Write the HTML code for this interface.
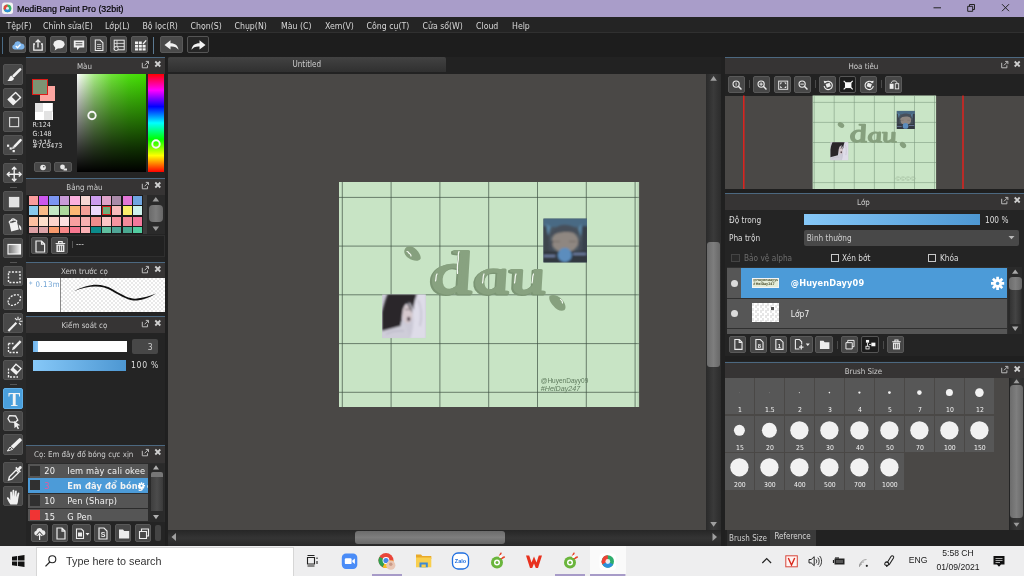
<!DOCTYPE html>
<html><head><meta charset="utf-8"><title>MediBang Paint Pro</title>
<style>
*{box-sizing:border-box;margin:0;padding:0}
html,body{width:1024px;height:576px;overflow:hidden;background:#1f1f1f;font-family:"DejaVu Sans Condensed","DejaVu Sans","Liberation Sans",sans-serif;font-size:8.2px;color:#d8d8d8}
.a{position:absolute}
.t{position:absolute;white-space:nowrap}
#title{left:0;top:0;width:1024px;height:17px;background:#a99dc9;color:#000;-webkit-text-stroke:.2px #000;font-family:"Liberation Sans",sans-serif;font-size:8.9px;line-height:18.400px}
#menu{left:0;top:17px;width:1024px;height:16px;background:#242424;border-bottom:1px solid #303030}
#menu span{position:absolute;top:0;line-height:18.200px;font-size:8.7px;color:#d8d8d8;white-space:nowrap}
#tbar{left:0;top:33px;width:1024px;height:24px;background:#1d1d1d}
.tb{position:absolute;top:36px;height:17px;background:#4a4a4a;border:1px solid #595959;border-radius:2px}
.tool{position:absolute;left:2.500px;width:20.400px;height:20.600px;background:#484848;border:1px solid #545454;border-radius:2px}
svg{position:absolute;left:0;top:0;overflow:visible}
.ph{position:absolute;height:16.500px;background:#363434;border-top:1px solid #4c6880;color:#cdcdcd;font-size:7.9px;line-height:17.400px;text-align:center;white-space:nowrap}
.pb{position:absolute;background:#242424}
.sb{position:absolute;height:17px;background:#474747;border:1px solid #595959;border-radius:2px}
</style></head><body><div id="root" style="position:absolute;left:0;top:0;width:1024px;height:576px;overflow:hidden;will-change:transform">
<div id="title" class="a">
<svg width="17" height="17" viewBox="0 0 17 17"><rect x="2" y="2.5" width="11" height="11.5" rx="2.5" fill="#f4f4f4"/><circle cx="7.5" cy="8.3" r="3.9" fill="#35b26a"/><path d="M7.5 8.3 L7.5 4.4 A3.9 3.9 0 0 0 4.1 10.2 Z" fill="#e8433a"/><path d="M7.5 8.3 L4.1 10.2 A3.9 3.9 0 0 0 10.9 10.2 Z" fill="#2f8fd8"/><circle cx="7.5" cy="8.3" r="1.5" fill="#fff" opacity=".85"/></svg>
<span class="t" style="left:17px;top:0">MediBang Paint Pro (32bit)</span>
<svg width="1024" height="17" viewBox="0 0 1024 17" fill="none" stroke="#222" stroke-width="1"><path d="M933.500 7.800h7.500"/><path d="M967.700 6.300h5v5h-5z M969.500 6.300v-1.800h5v5h-1.800"/><path d="M1002 4.200l7 7 M1009 4.200l-7 7"/></svg>
</div>
<div id="menu" class="a">
<span style="left:6.5px">Tệp(F)</span>
<span style="left:43px">Chỉnh sửa(E)</span>
<span style="left:105px">Lớp(L)</span>
<span style="left:142.5px">Bộ lọc(R)</span>
<span style="left:190.5px">Chọn(S)</span>
<span style="left:234.5px">Chụp(N)</span>
<span style="left:281px">Màu (C)</span>
<span style="left:325px">Xem(V)</span>
<span style="left:366.5px">Công cụ(T)</span>
<span style="left:422.5px">Cửa sổ(W)</span>
<span style="left:476px">Cloud</span>
<span style="left:512px">Help</span>
</div>
<div id="tbar" class="a"><div class="a" style="left:2px;top:4px;width:1px;height:17px;background:#4a6a84"></div><div class="a" style="left:153px;top:4px;width:1px;height:17px;background:#5c7a92"></div></div>
<div class="tb" style="left:9px;width:17px"><svg width="17" height="17" viewBox="0 0 17 17"><path d="M4.5 12.5a2.6 2.6 0 0 1-.3-5.1 3.6 3.6 0 0 1 6.9-.8 2.9 2.9 0 0 1 .9 5.9z" fill="#7db4ea"/><path d="M5.8 9l1.7 1.7 3-3.2" fill="none" stroke="#fff" stroke-width="1.3"/></svg></div>
<div class="tb" style="left:29px;width:17px"><svg width="17" height="17" viewBox="0 0 17 17" fill="none" stroke="#f0f0f0" stroke-width="1.3"><path d="M5 7H3.8v6.2h8.4V7H11"/><path d="M8 10.5V3.2M5.6 5.4L8 3l2.4 2.4"/></svg></div>
<div class="tb" style="left:49.5px;width:17px"><svg width="17" height="17" viewBox="0 0 17 17"><ellipse cx="8" cy="7.3" rx="5.6" ry="4.2" fill="#f0f0f0"/><path d="M4.5 10l-.8 3.4 3.6-2.4z" fill="#f0f0f0"/></svg></div>
<div class="tb" style="left:69.8px;width:17px"><svg width="17" height="17" viewBox="0 0 17 17"><path d="M2.8 3.5h10.4v7H8.6L6 13.2v-2.7H2.8z" fill="#f0f0f0"/><path d="M4.6 5.7h6.8M4.6 7.9h6.8" stroke="#4b4b4b" stroke-width="1"/></svg></div>
<div class="tb" style="left:90px;width:17px"><svg width="17" height="17" viewBox="0 0 17 17" fill="none" stroke="#ececec" stroke-width="1.100"><path d="M4.300 3h4.800l2.800 2.800v7.700H4.300z"/><path d="M6 7.500h4.200M6 9.500h4.200M6 11.500h4.200" stroke-width=".7"/></svg></div>
<div class="tb" style="left:110px;width:17px"><svg width="17" height="17" viewBox="0 0 17 17" fill="none" stroke="#ececec" stroke-width="1"><rect x="3.200" y="3.200" width="10" height="9.600"/><path d="M3.200 6.400h10M3.200 9.600h10M6 3.200v9.600" stroke-width=".8"/><circle cx="5.200" cy="11.600" r="2" fill="#4a4a4a" stroke-width=".9"/></svg></div>
<div class="tb" style="left:130.5px;width:17px"><svg width="17" height="17" viewBox="0 0 17 17" fill="#f0f0f0"><rect x="3" y="4.5" width="3" height="2.6"/><rect x="6.8" y="4.5" width="3" height="2.6"/><rect x="3" y="7.9" width="3" height="2.6"/><rect x="6.8" y="7.9" width="3" height="2.6"/><rect x="10.6" y="7.9" width="3" height="2.6"/><rect x="3" y="11.3" width="3" height="2.2"/><rect x="6.8" y="11.3" width="3" height="2.2"/><rect x="10.6" y="11.3" width="3" height="2.2"/><path d="M10.5 6.5l3.2-3.6 1 .9-3.2 3.6z"/></svg></div>
<div class="tb" style="left:160px;width:22.5px"><svg width="22" height="17" viewBox="0 0 22 17"><path d="M3.5 8L9.5 3.2v3c4.5 0 7.5 2 8 6.6-1.6-2.6-4-3.6-8-3.4v3.2z" fill="#f2f2f2"/></svg></div>
<div class="tb" style="left:186.5px;width:22.5px;background:#262626;border-color:#555"><svg width="22" height="17" viewBox="0 0 22 17"><path d="M17.5 8L11.5 3.2v3c-4.5 0-7.5 2-8 6.6 1.6-2.6 4-3.6 8-3.4v3.2z" fill="#f2f2f2"/></svg></div>
<div class="a" style="left:0;top:56.500px;width:26px;height:1px;background:#3a4854"></div>
<div class="a" style="left:0;top:57px;width:26px;height:489px;background:#282828"></div>
<div class="tool" style="top:64.2px;"><svg width="21" height="21" viewBox="0 0 21 21"><path d="M16.200 4.300L9.600 11" stroke="#f0f0f0" stroke-width="2.500" stroke-linecap="round"/><path d="M7.200 10.600l2.800 2.800c-.600 2.400-3.600 3.200-6.600 2.400 1.800-.800 1.600-3.800 3.800-5.200z" fill="#f0f0f0"/></svg></div>
<div class="tool" style="top:87.7px;"><svg width="21" height="21" viewBox="0 0 21 21"><path d="M11.600 3.600l5 5-7.400 7-5-5z" fill="none" stroke="#f0f0f0" stroke-width="1.400" stroke-linejoin="round"/><path d="M7.400 7.600l5 5-3.200 3-5-5z" fill="#f0f0f0"/></svg></div>
<div class="tool" style="top:111.2px;"><svg width="21" height="21" viewBox="0 0 21 21"><rect x="5.600" y="5.600" width="9" height="9" fill="none" stroke="#d2d2d2" stroke-width="1.200"/></svg></div>
<div class="tool" style="top:134.7px;"><svg width="21" height="21" viewBox="0 0 21 21"><path d="M16.600 4.200L10.600 10.400" stroke="#f0f0f0" stroke-width="2.500" stroke-linecap="round"/><path d="M8.800 10.200l2 2-2.800.900z" fill="#f0f0f0"/><rect x="3" y="8.600" width="2.200" height="2.200" fill="#f0f0f0"/><rect x="5.600" y="11.400" width="2.200" height="2.200" fill="#f0f0f0"/><rect x="8.600" y="14" width="2.200" height="2.200" fill="#f0f0f0"/></svg></div>
<div class="tool" style="top:162.7px;"><svg width="21" height="21" viewBox="0 0 21 21" fill="none" stroke="#f0f0f0" stroke-width="1.400"><path d="M10.200 3.500v13.500M3.500 10.200h13.500"/><path d="M8 5.600l2.200-2.300 2.200 2.300M8 14.800l2.200 2.300 2.200-2.300M5.600 8l-2.300 2.200 2.300 2.200M14.800 8l2.300 2.200-2.300 2.200"/></svg></div>
<div class="tool" style="top:190.7px;"><svg width="21" height="21" viewBox="0 0 21 21"><rect x="5.300" y="5.300" width="9.600" height="9.600" fill="#e2e2e2" stroke="#f6f6f6" stroke-width=".8"/></svg></div>
<div class="tool" style="top:214.2px;"><svg width="21" height="21" viewBox="0 0 21 21"><path d="M5.200 7.600l7.600-1.600 2 8.400-7.600 2.200z" fill="#f0f0f0"/><ellipse cx="9" cy="6.600" rx="3.900" ry="1.500" fill="#474747" stroke="#f0f0f0" stroke-width="1.100" transform="rotate(-12 9 6.600)"/><path d="M7 6.500c0-3.600 4-3.600 4.200-.4" fill="none" stroke="#f0f0f0" stroke-width="1.100"/><path d="M14.600 9.500c2.600 1.400 3 3.600 2.600 5.800-1.600-.600-2.200-2.200-2.600-5.800z" fill="#f0f0f0"/></svg></div>
<div class="tool" style="top:237.7px;"><svg width="21" height="21" viewBox="0 0 21 21"><defs><linearGradient id="gg" x1="0" x2="1"><stop offset="0" stop-color="#6c6c6c"/><stop offset="1" stop-color="#f4f4f4"/></linearGradient></defs><rect x="4" y="5.500" width="12.500" height="9.500" fill="url(#gg)" stroke="#f4f4f4" stroke-width="1.200"/></svg></div>
<div class="tool" style="top:265.7px;"><svg width="21" height="21" viewBox="0 0 21 21"><rect x="4.500" y="5" width="11.500" height="10.500" fill="none" stroke="#f0f0f0" stroke-width="1.400" stroke-dasharray="2 1.400"/></svg></div>
<div class="tool" style="top:289.2px;"><svg width="21" height="21" viewBox="0 0 21 21"><path d="M4.200 12.500c-.600-3.400 3.200-7.600 8-7.800 4.600-.200 5.600 3.600 3 6.800-2.400 3-6.800 4.800-9.200 3.400-1-.600-1.600-1.400-1.800-2.400z" fill="none" stroke="#f0f0f0" stroke-width="1.300" stroke-dasharray="2 1.300"/></svg></div>
<div class="tool" style="top:312.7px;"><svg width="21" height="21" viewBox="0 0 21 21"><path d="M3.600 16.200l8-8.200 1.500 1.500-8 8.200z" fill="#f0f0f0"/><path d="M14 2.800v3.400M11 4.200l2 2M17 4.200l-2 2M15.500 7.200h3M15 9l2 2" stroke="#f0f0f0" stroke-width="1.100" fill="none"/></svg></div>
<div class="tool" style="top:336.2px;"><svg width="21" height="21" viewBox="0 0 21 21"><path d="M4.500 6.500v9h9.500" fill="none" stroke="#f0f0f0" stroke-width="1.300" stroke-dasharray="2 1.300"/><path d="M4.500 6.500h5" fill="none" stroke="#f0f0f0" stroke-width="1.300" stroke-dasharray="2 1.300"/><path d="M15.800 3.200l1.700 1.700-7 7.400-2.600.900.900-2.600z" fill="#f0f0f0"/></svg></div>
<div class="tool" style="top:359.7px;"><svg width="21" height="21" viewBox="0 0 21 21"><path d="M4.500 7.500v8.500h9.500" fill="none" stroke="#f0f0f0" stroke-width="1.300" stroke-dasharray="2 1.300"/><path d="M12 3.200l5 4.400-4.800 5.400-5-4.400z" fill="none" stroke="#f0f0f0" stroke-width="1.300"/><path d="M9.200 6.600l4.800 4.200-1.800 2.200-5-4.400z" fill="#f0f0f0"/></svg></div>
<div class="tool" style="top:388px;background:#4a9fdc;border-color:#5fb0ea;"><svg width="21" height="21" viewBox="0 0 21 21"><text x="10.300" y="16.500" text-anchor="middle" font-family="Liberation Serif,serif" font-weight="bold" font-size="18" fill="#f4f4f4">T</text></svg></div>
<div class="tool" style="top:410.7px;"><svg width="21" height="21" viewBox="0 0 21 21"><path d="M5.400 3.600l6.200.400 2.200 4-2.600 2.400-5.200-.400-2-3.400z" fill="none" stroke="#f0f0f0" stroke-width="1.300"/><path d="M10 9l6.200 4.200-2.600.500 1.500 2.800-1.300.700-1.500-2.800-1.800 1.800z" fill="#f0f0f0"/></svg></div>
<div class="tool" style="top:434.2px;"><svg width="21" height="21" viewBox="0 0 21 21"><path d="M15.500 3c1.300.300 2.200 1.200 2.400 2.400l-8.400 8.400-2.800-2.600z" fill="#f0f0f0"/><path d="M6 12l2.600 2.400-5.200 1.600z" fill="none" stroke="#f0f0f0" stroke-width="1"/></svg></div>
<div class="tool" style="top:462.2px;"><svg width="21" height="21" viewBox="0 0 21 21"><path d="M12.200 7l2.400 2.400-6.800 6.800-3.200.800.800-3.200z" fill="none" stroke="#f0f0f0" stroke-width="1.400"/><path d="M11.200 5l1.200-1.200 1.400 1.400 1.600-1.800c1.200-1.200 3.200.800 2 2l-1.800 1.600 1.400 1.400-1.200 1.200z" fill="#f0f0f0"/></svg></div>
<div class="tool" style="top:485.7px;"><svg width="21" height="21" viewBox="0 0 21 21"><path d="M6.400 17.500c-1.400-2-2.600-4-3.400-6-.400-1.200 1-1.800 1.700-.700l1.500 2.300V5.400c0-1.300 1.700-1.300 1.800 0l.300 4.400.200-6c0-1.300 1.800-1.300 1.800 0l.100 6 .600-5.300c.100-1.300 1.900-1.100 1.800.200l-.400 5.600 1.200-4c.400-1.200 2-.700 1.700.500-.700 3.200-1.100 5.400-1.300 7.400-.100 1.400-.500 2.400-1 3.300z" fill="#f0f0f0"/></svg></div>
<div class="a" style="left:10px;top:159px;width:7px;height:1px;background:#555"></div>
<div class="a" style="left:10px;top:187px;width:7px;height:1px;background:#555"></div>
<div class="a" style="left:10px;top:262px;width:7px;height:1px;background:#555"></div>
<div class="a" style="left:10px;top:383.5px;width:7px;height:1px;background:#555"></div>
<div class="a" style="left:10px;top:458.5px;width:7px;height:1px;background:#555"></div>
<div class="pb" style="left:26px;top:57px;width:138.800px;height:489px"></div>
<div class="ph" style="left:26px;top:57px;width:138.8px;padding-right:22px;line-height:17px">Màu<svg width="138.8" height="15" viewBox="0.19999999999998863 0 138.8 15"><path d="M116.500 4.800v5h5.200v-2.500M118.800 7.300l3.600-3.600M120 3.400h2.700v2.700" fill="none" stroke="#bdbdbd" stroke-width="1"/><path d="M129.500 3.500l5 5M134.500 3.500l-5 5" stroke="#d0d0d0" stroke-width="1.800"/></svg></div>
<div class="a" style="left:40px;top:86px;width:15px;height:15px;background:#fca5a0"></div>
<div class="a" style="left:32px;top:79px;width:15.800px;height:15.500px;background:#7c9473;border:1.800px solid #dc1c18"></div>
<div class="a" style="left:34.500px;top:103px;width:18px;height:17px;background:conic-gradient(#fff 25%,#e2e2e2 0 50%,#fff 0 75%,#e2e2e2 0) 0 0/17px 17px"></div>
<span class="t" style="left:32.500px;top:121px;font-size:7px;line-height:9px;color:#e4e4e4">R:124</span>
<span class="t" style="left:32.500px;top:129.5px;font-size:7px;line-height:9px;color:#e4e4e4">G:148</span>
<span class="t" style="left:32.500px;top:142px;font-size:7px;line-height:9px;color:#e4e4e4">#7C9473</span>
<div class="a" style="left:32.500px;top:138.500px;width:30px;height:4px;overflow:hidden"><span class="t" style="left:0;top:-1px;font-size:7.200px;line-height:9px;color:#e8e8e8">B:115</span></div>
<div class="sb" style="left:33.500px;top:161.500px;width:17.500px;height:10.500px;border-radius:2px"><svg width="17" height="10" viewBox="0 0 17 10"><circle cx="8" cy="4.500" r="2.800" fill="#e8e8e8"/><circle cx="8.800" cy="3.800" r=".8" fill="#474747"/></svg></div>
<div class="sb" style="left:54px;top:161.500px;width:17.500px;height:10.500px;border-radius:2px"><svg width="17" height="10" viewBox="0 0 17 10"><circle cx="7.500" cy="4" r="2.400" fill="#e8e8e8"/><path d="M8.500 5.500h3.500v2h-3.500z" fill="#e8e8e8"/></svg></div>
<div class="a" style="left:77px;top:74px;width:68.500px;height:98px;background:linear-gradient(to bottom,rgba(0,0,0,0) 0%,rgba(0,0,0,.27) 25%,rgba(0,0,0,.53) 50%,rgba(0,0,0,.78) 75%,#000 100%),linear-gradient(to right,#fff 0%,#a8ee84 25%,#6ee436 50%,#4de010 75%,#40de00 100%)"></div>
<div class="a" style="left:148.300px;top:74px;width:15.400px;height:98px;background:linear-gradient(to bottom,#ff0000 0%,#ff00ff 16.600%,#0000ff 33.300%,#00ffff 50%,#00ff00 66.600%,#ffff00 83.300%,#ff0000 100%)"></div>
<svg width="1024" height="576" viewBox="0 0 1024 576"><circle cx="92" cy="115.500" r="3.700" fill="none" stroke="#f6f6f6" stroke-width="1.900"/><circle cx="156" cy="144" r="3.700" fill="none" stroke="#f6f6f6" stroke-width="1.900"/></svg>
<div class="ph" style="left:26px;top:178px;width:138.8px;padding-right:22px;height:17px">Bảng màu<svg width="138.8" height="15" viewBox="0.19999999999998863 0 138.8 15"><path d="M116.500 4.800v5h5.200v-2.500M118.800 7.300l3.600-3.600M120 3.400h2.700v2.700" fill="none" stroke="#bdbdbd" stroke-width="1"/><path d="M129.500 3.500l5 5M134.500 3.500l-5 5" stroke="#d0d0d0" stroke-width="1.800"/></svg></div>
<div class="a" style="left:27px;top:194.500px;width:117px;height:39.500px;background:#1b1b1b"></div>
<div class="a" style="left:28.50px;top:195.7px;width:9.300px;height:9px;background:#fb9c9c"></div>
<div class="a" style="left:38.96px;top:195.7px;width:9.300px;height:9px;background:#cc57ee"></div>
<div class="a" style="left:49.42px;top:195.7px;width:9.300px;height:9px;background:#7c96f2"></div>
<div class="a" style="left:59.88px;top:195.7px;width:9.300px;height:9px;background:#c89bd8"></div>
<div class="a" style="left:70.34px;top:195.7px;width:9.300px;height:9px;background:#fcb0de"></div>
<div class="a" style="left:80.80px;top:195.7px;width:9.300px;height:9px;background:#f6d6d2"></div>
<div class="a" style="left:91.26px;top:195.7px;width:9.300px;height:9px;background:#cc9cee"></div>
<div class="a" style="left:101.72px;top:195.7px;width:9.300px;height:9px;background:#dfa3c9"></div>
<div class="a" style="left:112.18px;top:195.7px;width:9.300px;height:9px;background:#a98aa8"></div>
<div class="a" style="left:122.64px;top:195.7px;width:9.300px;height:9px;background:#e377d7"></div>
<div class="a" style="left:133.10px;top:195.7px;width:9.300px;height:9px;background:#6fa6e2"></div>
<div class="a" style="left:28.50px;top:206.2px;width:9.300px;height:9px;background:#88caee"></div>
<div class="a" style="left:38.96px;top:206.2px;width:9.300px;height:9px;background:#f8bb88"></div>
<div class="a" style="left:49.42px;top:206.2px;width:9.300px;height:9px;background:#c4e8c4"></div>
<div class="a" style="left:59.88px;top:206.2px;width:9.300px;height:9px;background:#acd89c"></div>
<div class="a" style="left:70.34px;top:206.2px;width:9.300px;height:9px;background:#fbb874"></div>
<div class="a" style="left:80.80px;top:206.2px;width:9.300px;height:9px;background:#f4a097"></div>
<div class="a" style="left:91.26px;top:206.2px;width:9.300px;height:9px;background:#ecd9fb"></div>
<div class="a" style="left:101.72px;top:206.2px;width:9.300px;height:9px;background:#6fae7a;border:1.500px solid #d8201c"></div>
<div class="a" style="left:112.18px;top:206.2px;width:9.300px;height:9px;background:#f8bcbc"></div>
<div class="a" style="left:122.64px;top:206.2px;width:9.300px;height:9px;background:#fbee6c"></div>
<div class="a" style="left:133.10px;top:206.2px;width:9.300px;height:9px;background:#cdf2ee"></div>
<div class="a" style="left:28.50px;top:216.9px;width:9.300px;height:9px;background:#fcc0a0"></div>
<div class="a" style="left:38.96px;top:216.9px;width:9.300px;height:9px;background:#fde0cc"></div>
<div class="a" style="left:49.42px;top:216.9px;width:9.300px;height:9px;background:#fcd4cc"></div>
<div class="a" style="left:59.88px;top:216.9px;width:9.300px;height:9px;background:#fce0e0"></div>
<div class="a" style="left:70.34px;top:216.9px;width:9.300px;height:9px;background:#f8a0a0"></div>
<div class="a" style="left:80.80px;top:216.9px;width:9.300px;height:9px;background:#f7b0b0"></div>
<div class="a" style="left:91.26px;top:216.9px;width:9.300px;height:9px;background:#ee8c8c"></div>
<div class="a" style="left:101.72px;top:216.9px;width:9.300px;height:9px;background:#fcc5c5"></div>
<div class="a" style="left:112.18px;top:216.9px;width:9.300px;height:9px;background:#f794a0"></div>
<div class="a" style="left:122.64px;top:216.9px;width:9.300px;height:9px;background:#f48a9a"></div>
<div class="a" style="left:133.10px;top:216.9px;width:9.300px;height:9px;background:#f2789c"></div>
<div class="a" style="left:28.50px;top:227.1px;width:9.300px;height:6.3px;background:#dda0a4"></div>
<div class="a" style="left:38.96px;top:227.1px;width:9.300px;height:6.3px;background:#dda4a8"></div>
<div class="a" style="left:49.42px;top:227.1px;width:9.300px;height:6.3px;background:#f89a6c"></div>
<div class="a" style="left:59.88px;top:227.1px;width:9.300px;height:6.3px;background:#f88888"></div>
<div class="a" style="left:70.34px;top:227.1px;width:9.300px;height:6.3px;background:#f87890"></div>
<div class="a" style="left:80.80px;top:227.1px;width:9.300px;height:6.3px;background:#fbb0b4"></div>
<div class="a" style="left:91.26px;top:227.1px;width:9.300px;height:6.3px;background:#0b8a8a"></div>
<div class="a" style="left:101.72px;top:227.1px;width:9.300px;height:6.3px;background:#5fbf9f"></div>
<div class="a" style="left:112.18px;top:227.1px;width:9.300px;height:6.3px;background:#4fa596"></div>
<div class="a" style="left:122.64px;top:227.1px;width:9.300px;height:6.3px;background:#4aa890"></div>
<div class="a" style="left:133.10px;top:227.1px;width:9.300px;height:6.3px;background:#52cca0"></div>
<div class="a" style="left:143px;top:194.500px;width:4px;height:39px;background:#3c3c3c"></div>
<div class="a" style="left:147px;top:194.500px;width:17.500px;height:39px;background:#2a2a2a"></div>
<div class="a" style="left:148.500px;top:204.500px;width:14.500px;height:17px;background:linear-gradient(to right,#6a6a6a,#7c7c7c 50%,#666);border-radius:4px"></div>
<svg width="1024" height="576" viewBox="0 0 1024 576" style="pointer-events:none"><path d="M152.500 201.500l3.300-4.500 3.300 4.500z M152.500 226.500l3.300 4.500 3.300-4.500z" fill="#9a9a9a"/></svg>
<div class="a" style="left:28.500px;top:235px;width:136px;height:21.500px;border:1px solid #2f2f2f;background:#212121"></div>
<div class="sb" style="left:31px;top:236.500px;width:17px;height:17.500px"><svg width="17" height="17" viewBox="0 0 17 17"><path d="M4 3h5.600l3 3v8H4z M9.500 3v3.200h3" fill="none" stroke="#ececec" stroke-width="1.200"/></svg></div>
<div class="sb" style="left:51px;top:236.500px;width:17px;height:17.500px"><svg width="17" height="17" viewBox="0 0 17 17"><path d="M3.600 5.500h9.600M6.600 5.200v-1.600h3.600v1.600" fill="none" stroke="#ececec" stroke-width="1.200"/><path d="M4.400 6.500h8v7.500h-8z" fill="#ececec"/><path d="M6.400 7.800v5M8.400 7.800v5M10.400 7.800v5" stroke="#474747" stroke-width=".9"/></svg></div>
<div class="a" style="left:72px;top:241px;width:1px;height:7px;background:#555"></div>
<span class="t" style="left:76px;top:240.300px;font-size:8px;line-height:10px;color:#ddd">---</span>
<div class="ph" style="left:26px;top:262px;width:138.8px;padding-right:22px">Xem trước cọ<svg width="138.8" height="15" viewBox="0.19999999999998863 0 138.8 15"><path d="M116.500 4.800v5h5.200v-2.500M118.800 7.300l3.600-3.600M120 3.400h2.700v2.700" fill="none" stroke="#bdbdbd" stroke-width="1"/><path d="M129.500 3.500l5 5M134.500 3.500l-5 5" stroke="#d0d0d0" stroke-width="1.800"/></svg></div>
<div class="a" style="left:26.500px;top:277.500px;width:138.500px;height:34px;background:conic-gradient(#fff 25%,#e9e9e9 0 50%,#fff 0 75%,#e9e9e9 0) 0 0/4px 4px"></div>
<div class="a" style="left:26.500px;top:277.500px;width:34px;height:34px;background:#fff;border-right:1px solid #888;overflow:hidden"><span class="t" style="left:2.500px;top:2px;font-size:7.800px;letter-spacing:.4px;line-height:10px;color:#6a9fd2">* 0.13mm</span></div>
<svg width="1024" height="576" viewBox="0 0 1024 576"><path d="M73 291.500c16-8 28-9 40-2 12 7 18 10 24 9 6-.500 13-2.500 19-5-6 4-13 6.500-19 7-7 .500-14-3-25-9.500-11-6.500-23-5.500-39 .500z" fill="#111"/></svg>
<div class="ph" style="left:26px;top:316px;width:138.8px;padding-right:22px">Kiểm soát cọ<svg width="138.8" height="15" viewBox="0.19999999999998863 0 138.8 15"><path d="M116.500 4.800v5h5.200v-2.500M118.800 7.300l3.600-3.600M120 3.400h2.700v2.700" fill="none" stroke="#bdbdbd" stroke-width="1"/><path d="M129.500 3.500l5 5M134.500 3.500l-5 5" stroke="#d0d0d0" stroke-width="1.800"/></svg></div>
<div class="a" style="left:33px;top:340.600px;width:94.400px;height:11.400px;background:#fff"><div class="a" style="left:0;top:0;width:4.500px;height:11.400px;background:linear-gradient(to right,#6db4ee,#8cc8f6)"></div></div>
<div class="a" style="left:132px;top:338.500px;width:26px;height:15.500px;background:#474747;border-radius:2px;color:#cfcfcf;font-size:8.500px;line-height:17px;text-align:right;padding-right:5.500px">3</div>
<div class="a" style="left:33px;top:359.500px;width:92.800px;height:11.500px;background:linear-gradient(to right,#86c8f8,#4d97d2)"></div>
<span class="t" style="left:131px;top:360px;font-size:8.600px;letter-spacing:.7px;line-height:11px;color:#ddd">100 %</span>
<div class="ph" style="left:26px;top:445px;width:138.8px;text-align:left;padding-left:8px;font-size:7.900px;height:17.500px">Cọ: Em đây đổ bóng cực xịn<svg width="138.8" height="15" viewBox="0.19999999999998863 0 138.8 15"><path d="M116.500 4.800v5h5.200v-2.500M118.800 7.300l3.600-3.600M120 3.400h2.700v2.700" fill="none" stroke="#bdbdbd" stroke-width="1"/><path d="M129.500 3.500l5 5M134.500 3.500l-5 5" stroke="#d0d0d0" stroke-width="1.800"/></svg></div>
<div class="a" style="left:28.500px;top:462.500px;width:136px;height:59.500px;background:#2c2c2c"></div>
<div class="a" style="left:28.300px;top:464px;width:119.500px;height:13.6px;background:#555555;overflow:hidden;font-size:9.200px;letter-spacing:.15px;line-height:14.3px;color:#f2f2f2;"><div class="a" style="left:2.200px;top:1.500px;width:9.800px;height:10.200px;background:#303030"></div><span class="t" style="left:16px;top:0;">20</span><span class="t" style="left:39px;top:0">Iem mày cali okee</span></div>
<div class="a" style="left:28.300px;top:478.2px;width:119.500px;height:15.2px;background:#4c9bd8;overflow:hidden;font-size:9.200px;letter-spacing:.15px;line-height:15.5px;color:#f2f2f2;font-weight:bold;"><div class="a" style="left:2.200px;top:1.500px;width:9.800px;height:10.200px;background:#303030"></div><span class="t" style="left:16px;top:0;color:#e85a9c;font-weight:normal">3</span><span class="t" style="left:39px;top:0">Em đây đổ bóng c</span></div>
<div class="a" style="left:28.300px;top:493.9px;width:119.500px;height:14.2px;background:#555555;overflow:hidden;font-size:9.200px;letter-spacing:.15px;line-height:14.3px;color:#f2f2f2;"><div class="a" style="left:2.200px;top:1.500px;width:9.800px;height:10.200px;background:#303030"></div><span class="t" style="left:16px;top:0;">10</span><span class="t" style="left:39px;top:0">Pen (Sharp)</span></div>
<div class="a" style="left:28.300px;top:508.7px;width:119.500px;height:12.6px;background:#555555;overflow:hidden;font-size:9.200px;letter-spacing:.15px;line-height:15.3px;color:#f2f2f2;"><div class="a" style="left:2.200px;top:1.500px;width:9.800px;height:10.200px;background:#f03434"></div><span class="t" style="left:16px;top:0;">15</span><span class="t" style="left:39px;top:0">G Pen</span></div>
<svg width="1024" height="576" viewBox="0 0 1024 576"><g transform="translate(141.500 485.800)" fill="#fff"><circle r="2.300"/><g stroke="#fff" stroke-width="1.400"><path d="M0-3.600V3.600M-3.600 0H3.600M-2.550-2.550L2.550 2.550M-2.550 2.550L2.550-2.550"/></g><circle r="1" fill="#4c9bd8"/></g></svg>
<div class="a" style="left:150px;top:463.500px;width:13.500px;height:58px;background:#2a2a2a"></div>
<div class="a" style="left:150.500px;top:472px;width:12.500px;height:5px;background:#777;border-radius:2px 2px 0 0"></div><div class="a" style="left:150.500px;top:477px;width:12.500px;height:34px;background:linear-gradient(to right,#3e3e3e,#4c4c4c,#3a3a3a)"></div>
<svg width="1024" height="576" viewBox="0 0 1024 576"><path d="M153 469.500l3-4.200 3 4.200z M153 515l3 4.200 3-4.200z" fill="#b0b0b0"/></svg>
<div class="sb" style="left:31px;top:524px;width:16.5px;height:17.500px"><svg width="16.5" height="17" viewBox="0 0 16.5 17"><path d="M4 10.500a2.400 2.400 0 0 1 .3-4.700 3.200 3.200 0 0 1 6.200-.6 2.600 2.600 0 0 1 .5 5.200z" fill="#ececec"/><path d="M7.600 14.500v-6M5.200 10.500l2.400-2.600 2.400 2.600" fill="none" stroke="#474747" stroke-width="2.200"/><path d="M7.600 15v-6M5.400 10.800l2.200-2.400 2.200 2.400" fill="none" stroke="#ececec" stroke-width="1.200"/></svg></div>
<div class="sb" style="left:51.5px;top:524px;width:16px;height:17.500px"><svg width="16" height="17" viewBox="0 0 16 17"><path d="M4 3h5l3 3v8H4z M9 3v3.200h3" fill="none" stroke="#ececec" stroke-width="1.200"/></svg></div>
<div class="sb" style="left:71.5px;top:524px;width:19px;height:17.500px"><svg width="19" height="17" viewBox="0 0 19 17"><path d="M3.500 4h5l2 2v7.500h-7z" fill="none" stroke="#ececec" stroke-width="1.100"/><rect x="5" y="7.500" width="4" height="4" fill="#ececec"/><path d="M12.500 8h4l-2 2.600z" fill="#ececec"/></svg></div>
<div class="sb" style="left:94px;top:524px;width:16.5px;height:17.500px"><svg width="16.5" height="17" viewBox="0 0 16.5 17"><path d="M4 3h5l3 3v8H4z" fill="none" stroke="#ececec" stroke-width="1.200"/><text x="8" y="12.300" text-anchor="middle" font-size="7" font-family="Liberation Sans,sans-serif" fill="#ececec" font-weight="bold">S</text></svg></div>
<div class="sb" style="left:114.5px;top:524px;width:16px;height:17.500px"><svg width="16" height="17" viewBox="0 0 16 17"><path d="M3 4.500h4l1.200 1.500h5v7.500H3z" fill="#ececec"/></svg></div>
<div class="sb" style="left:134.5px;top:524px;width:16.5px;height:17.500px"><svg width="16.5" height="17" viewBox="0 0 16.5 17"><path d="M3.500 6.500h7v7h-7z M5.500 6.500v-2.500h7v7h-2" fill="none" stroke="#ececec" stroke-width="1.100"/></svg></div>
<div class="a" style="left:155px;top:525px;width:6px;height:16px;background:#444;border-radius:2px"></div>
<div class="a" style="left:165.500px;top:57px;width:560px;height:489px;background:#202020"></div>
<div class="a" style="left:168px;top:57px;width:553px;height:17px;background:#222"></div>
<div class="a" style="left:168px;top:57px;width:277.500px;height:15px;background:linear-gradient(#424242,#303030);border-radius:2px 2px 0 0;color:#cfcfcf;font-size:8px;line-height:16.500px;text-align:center">Untitled</div>
<div class="a" style="left:168px;top:73.500px;width:538.500px;height:456px;background:#4a4846"></div>
<div class="a" style="left:706.300px;top:73.500px;width:14.500px;height:456px;background:linear-gradient(to right,#2a2a2a,#3a3a3a 50%,#2c2c2c)"></div>
<div class="a" style="left:707.300px;top:242px;width:12.500px;height:124.500px;background:linear-gradient(to right,#6c6c6c,#7e7e7e 50%,#686868);border-radius:3px"></div>
<div class="a" style="left:168px;top:530px;width:553px;height:16px;background:linear-gradient(#262626,#343434 50%,#282828)"></div>
<div class="a" style="left:355px;top:531px;width:150px;height:12.500px;background:linear-gradient(#6c6c6c,#7e7e7e 50%,#686868);border-radius:3px"></div>
<svg width="1024" height="576" viewBox="0 0 1024 576"><path d="M710.300 80.800l3.300-4.800 3.300 4.800z M710.300 522l3.300 4.800 3.300-4.800z M176 533l-4.500 4 4.500 4z M712.500 533l4.500 4-4.500 4z" fill="#a0a0a0"/></svg>
<svg width="1024" height="576" viewBox="0 0 1024 576">
<defs><filter id="bl" x="-10%" y="-10%" width="120%" height="120%"><feGaussianBlur stdDeviation="1.100"/></filter><clipPath id="c1"><rect x="543.400" y="218.600" width="43.600" height="43.800"/></clipPath><clipPath id="c2"><rect x="382.200" y="294.600" width="43.600" height="43.500"/></clipPath></defs>
<rect x="339" y="182" width="300.100" height="225" fill="#c8e4c5"/>
<path d="M342.3 182v225M391.1 182v225M439.9 182v225M488.7 182v225M537.5 182v225M586.3 182v225M635.1 182v225M339 197.4h300.100M339 246.1h300.100M339 294.8h300.100M339 343.6h300.100M339 392.3h300.100" stroke="#3f5143" stroke-width=".7" fill="none"/>
<path d="M638.100 182v225" stroke="#9fba9e" stroke-width=".6" fill="none"/>
<rect x="543.400" y="218.600" width="43.600" height="43.800" fill="#4a5661"/>
<g clip-path="url(#c1)"><g filter="url(#bl)"><rect x="543" y="218" width="45" height="9" fill="#4a6a84"/><rect x="543" y="226" width="6" height="26" fill="#3c444e"/><rect x="582" y="226" width="6" height="26" fill="#39414b"/><ellipse cx="565" cy="241.500" rx="13.500" ry="11" fill="#8f8781"/><path d="M549 238c3-10 10-14 18-13 8 1 14 5 16 13-6-5-11-6-17-6-7 0-12 2-17 6z" fill="#47505a"/><path d="M551 240c-2 4-2 9-1 13l3-1c-1-4-1-8 0-11zM580 240c2 4 2 9 1 13l-3-1c1-4 1-8 0-11z" fill="#424a55"/><path d="M553 241.500h7M569 241.500h7" stroke="#6b5f5a" stroke-width=".8"/><rect x="543" y="251" width="45" height="12" fill="#30373f"/><ellipse cx="564.800" cy="255" rx="7" ry="7.200" fill="#5b8dbd"/><rect x="543.400" y="255" width="12" height="2" fill="#6f7fa4"/><rect x="573" y="253" width="13" height="2" fill="#6f7fa4"/><path d="M546 224l2 12 3-9zM582 224l-1 13-3-9z" fill="#5a86a6"/></g></g>
<rect x="382.200" y="294.600" width="43.600" height="43.500" fill="#cbc9d6"/>
<g clip-path="url(#c2)"><g filter="url(#bl)"><path d="M414 294c5-1 9-1 12 0v45h-16c3-8 4-16 3-24s0-14 1-21z" fill="#dedce8"/><path d="M382 327c7-4 13-6 19-5l5 4 4 13h-28z" fill="#cfcdd9"/><ellipse cx="407.500" cy="314" rx="5" ry="9.500" fill="#d6c9ce"/><path d="M387.600 294h29.400c-2 6-3.500 10-3 16l-3.500-7c-4-2-7 3-8 9s-1 10-2 14l-18.500 5v-19c2-8 4-14 5.600-18z" fill="#29272b"/><path d="M405 299c3 3 6 7 7.500 14l-2-3c-2-4-4-7-5.500-11z" fill="#29272b"/><ellipse cx="408.700" cy="319" rx="1.700" ry="2.300" fill="#43323c"/><path d="M405 309.500h4.500" stroke="#4a3f48" stroke-width=".8"/><path d="M418 300c3 6 4 16 2 26" stroke="#c4c2d0" stroke-width="1.500" fill="none"/><path d="M386 334c6-3 12-4 18-3" stroke="#b9b7c6" stroke-width="1.200" fill="none"/></g></g>
<g font-family="Liberation Serif,DejaVu Serif,serif" font-style="italic" font-size="53" stroke-linejoin="round" stroke-linecap="round" transform="translate(0 293) skewX(11) scale(1 1.04) translate(0 -293)"><text x="431.500" y="293.600" textLength="115" lengthAdjust="spacingAndGlyphs" fill="#7b9574" stroke="#7b9574" stroke-width="2.800"><tspan font-size="58">d</tspan><tspan font-size="48">au</tspan></text><text x="433" y="293" textLength="115" lengthAdjust="spacingAndGlyphs" fill="#88a280" stroke="#88a280" stroke-width="2.200"><tspan font-size="58">d</tspan><tspan font-size="48">au</tspan></text></g>
<path d="M404.500 250c1-4 6-5 10-2 4 3 7 8 6 11-2 3-8 2-12-1-3-2-5-5-4-8z" fill="#86a07e"/><path d="M549.500 296c3-2 8-1 12 3 4 4 5 9 3 11-3 2-8 0-11-4-3-3-5-7-4-10z" fill="#86a07e"/>
<path d="M407 251.500c1.500 0 1.500 1.500 2.500 2s1.500 1.500 1.500 2.500M560.500 299.500c1.500.500 2 2 2 3.500M437 274c-1.500 2-.500 4-1.500 7M459 251.500c-1.500 3 0 6-1 10s-.500 8-.500 12M484 274c-1.500 3-.500 6-1.500 9M516 274c-1.500 3-.500 6-1.500 9M533.500 274c-1.500 3-.500 6-1.500 9" stroke="#f6fbf4" stroke-width="1.200" fill="none" stroke-linecap="round"/>
<g font-family="Liberation Sans,sans-serif" font-size="6.600" fill="#5f7b5e"><text x="540.800" y="383.300" textLength="47.500" lengthAdjust="spacingAndGlyphs">@HuyenDayy09</text><text x="540.800" y="391.400" textLength="39.500" lengthAdjust="spacingAndGlyphs" font-style="italic">#HeiDay247</text></g>
</svg>
<div class="pb" style="left:724.800px;top:57px;width:299.200px;height:489px"></div>
<div class="ph" style="left:724.8px;top:57px;width:299.2px;padding-right:22px">Hoa tiêu<svg width="299.2" height="15" viewBox="-160.2 0 299.2 15"><path d="M116.500 4.800v5h5.200v-2.500M118.800 7.300l3.600-3.600M120 3.400h2.700v2.700" fill="none" stroke="#bdbdbd" stroke-width="1"/><path d="M129.500 3.500l5 5M134.500 3.500l-5 5" stroke="#d0d0d0" stroke-width="1.800"/></svg></div>
<div class="a" style="left:724.800px;top:73.500px;width:299.200px;height:22px;background:#222"></div>
<div class="sb" style="left:728px;top:75.500px;width:17px;height:17.300px;"><svg width="17" height="17" viewBox="0 0 17 17"><g transform="translate(1.100 1.100) scale(.86)"><circle cx="7" cy="7" r="3.600" fill="none" stroke="#ececec" stroke-width="1.300"/><path d="M9.600 9.600l3.600 3.600" stroke="#ececec" stroke-width="1.700"/><path d="M7 5.200v3.600" stroke="#ececec" stroke-width="1"/></g></svg></div>
<div class="sb" style="left:753.3px;top:75.500px;width:17px;height:17.300px;"><svg width="17" height="17" viewBox="0 0 17 17"><g transform="translate(1.100 1.100) scale(.86)"><circle cx="7" cy="7" r="3.600" fill="none" stroke="#ececec" stroke-width="1.300"/><path d="M9.600 9.600l3.600 3.600" stroke="#ececec" stroke-width="1.700"/><path d="M7 5v4M5 7h4" stroke="#ececec" stroke-width="1.100"/></g></svg></div>
<div class="sb" style="left:773.7px;top:75.500px;width:17px;height:17.300px;"><svg width="17" height="17" viewBox="0 0 17 17"><g transform="translate(1.100 1.100) scale(.86)"><rect x="3" y="3.500" width="10.500" height="9.500" fill="none" stroke="#ececec" stroke-width="1.100"/><path d="M4.800 5.200h2.400l-2.400 2.400zM11.800 5.200h-2.400l2.400 2.400zM4.800 11.400h2.400l-2.400-2.400zM11.800 11.400h-2.400l2.400-2.400z" fill="#ececec"/></g></svg></div>
<div class="sb" style="left:794px;top:75.500px;width:17px;height:17.300px;"><svg width="17" height="17" viewBox="0 0 17 17"><g transform="translate(1.100 1.100) scale(.86)"><circle cx="7" cy="7" r="3.600" fill="none" stroke="#ececec" stroke-width="1.300"/><path d="M9.600 9.600l3.600 3.600" stroke="#ececec" stroke-width="1.700"/><path d="M5 7h4" stroke="#ececec" stroke-width="1.100"/></g></svg></div>
<div class="sb" style="left:819px;top:75.500px;width:17px;height:17.300px;"><svg width="17" height="17" viewBox="0 0 17 17"><g transform="translate(1.100 1.100) scale(.86)"><path d="M4.800 5.200a4.800 4.800 0 1 1-1.300 4" fill="none" stroke="#ececec" stroke-width="1.300"/><path d="M3 3.200l3.400.600-2.600 2.600z" fill="#ececec"/><rect x="5.800" y="6" width="5" height="4.400" fill="#ececec" transform="rotate(-20 8.300 8.200)"/></g></svg></div>
<div class="sb" style="left:839.4px;top:75.500px;width:17px;height:17.300px;background:#1c1c1c;border-color:#555;"><svg width="17" height="17" viewBox="0 0 17 17"><g transform="translate(1.100 1.100) scale(.86)"><rect x="4.500" y="4.800" width="7.500" height="6.800" fill="#f8f8f8"/><path d="M3 3.200l2.400 2.400M13.500 3.200l-2.400 2.400M3 13.200l2.400-2.400M13.500 13.200l-2.400-2.400" stroke="#f8f8f8" stroke-width="1.300"/></g></svg></div>
<div class="sb" style="left:859.8px;top:75.500px;width:17px;height:17.300px;"><svg width="17" height="17" viewBox="0 0 17 17"><g transform="translate(1.100 1.100) scale(.86)"><path d="M11.700 5.200a4.800 4.800 0 1 0 1.300 4" fill="none" stroke="#ececec" stroke-width="1.300"/><path d="M13.500 3.200l-3.400.600 2.600 2.600z" fill="#ececec"/><rect x="5.800" y="6" width="5" height="4.400" fill="#ececec" transform="rotate(20 8.300 8.200)"/></g></svg></div>
<div class="sb" style="left:885px;top:75.500px;width:17px;height:17.300px;"><svg width="17" height="17" viewBox="0 0 17 17"><g transform="translate(1.100 1.100) scale(.86)"><rect x="3" y="6.500" width="4.500" height="6" fill="#ececec"/><rect x="9.500" y="6.500" width="4" height="6" fill="none" stroke="#ececec" stroke-width="1"/><path d="M5 5.500c0-3 6.500-3 6.500 0" fill="none" stroke="#ececec" stroke-width="1.100"/></g></svg></div>
<div class="a" style="left:749px;top:80px;width:1px;height:8px;background:#4a4a4a"></div>
<div class="a" style="left:815px;top:80px;width:1px;height:8px;background:#4a4a4a"></div>
<div class="a" style="left:881px;top:80px;width:1px;height:8px;background:#4a4a4a"></div>
<div class="a" style="left:724.800px;top:95.500px;width:299.200px;height:93.500px;background:#4a4846"></div>
<svg width="1024" height="576" viewBox="0 0 1024 576"><defs><clipPath id="nc"><rect x="812.600" y="95.500" width="123.500" height="93.500"/></clipPath><filter id="b2"><feGaussianBlur stdDeviation=".600"/></filter></defs>
<rect x="812.600" y="95.500" width="123.500" height="93.500" fill="#c9e5c6"/><g clip-path="url(#nc)">
<path d="M814.2 95v95M834.2 95v95M854.3 95v95M874.4 95v95M894.4 95v95M914.5 95v95M934.5 95v95M812 102.4h125M812 122.4h125M812 142.5h125M812 162.5h125M812 182.6h125" stroke="#7b967d" stroke-width=".55" fill="none"/>
<g transform="translate(812.500 95.800) scale(.4122) translate(-339 -182)"><rect x="543.400" y="218.600" width="43.600" height="43.800" fill="#4a5661"/><g clip-path="url(#c1)"><g filter="url(#bl)"><rect x="543" y="218" width="45" height="9" fill="#4a6a84"/><rect x="543" y="226" width="6" height="26" fill="#3c444e"/><rect x="582" y="226" width="6" height="26" fill="#39414b"/><ellipse cx="565" cy="241.500" rx="13.500" ry="11" fill="#8f8781"/><path d="M549 238c3-10 10-14 18-13 8 1 14 5 16 13-6-5-11-6-17-6-7 0-12 2-17 6z" fill="#47505a"/><path d="M551 240c-2 4-2 9-1 13l3-1c-1-4-1-8 0-11zM580 240c2 4 2 9 1 13l-3-1c1-4 1-8 0-11z" fill="#424a55"/><path d="M553 241.500h7M569 241.500h7" stroke="#6b5f5a" stroke-width=".8"/><rect x="543" y="251" width="45" height="12" fill="#30373f"/><ellipse cx="564.800" cy="255" rx="7" ry="7.200" fill="#5b8dbd"/><rect x="543.400" y="255" width="12" height="2" fill="#6f7fa4"/><rect x="573" y="253" width="13" height="2" fill="#6f7fa4"/><path d="M546 224l2 12 3-9zM582 224l-1 13-3-9z" fill="#5a86a6"/></g></g><rect x="382.200" y="294.600" width="43.600" height="43.500" fill="#cbc9d6"/><g clip-path="url(#c2)"><g filter="url(#bl)"><path d="M414 294c5-1 9-1 12 0v45h-16c3-8 4-16 3-24s0-14 1-21z" fill="#dedce8"/><path d="M382 327c7-4 13-6 19-5l5 4 4 13h-28z" fill="#cfcdd9"/><ellipse cx="407.500" cy="314" rx="5" ry="9.500" fill="#d6c9ce"/><path d="M387.600 294h29.400c-2 6-3.500 10-3 16l-3.500-7c-4-2-7 3-8 9s-1 10-2 14l-18.500 5v-19c2-8 4-14 5.600-18z" fill="#29272b"/><path d="M405 299c3 3 6 7 7.500 14l-2-3c-2-4-4-7-5.500-11z" fill="#29272b"/><ellipse cx="408.700" cy="319" rx="1.700" ry="2.300" fill="#43323c"/><path d="M405 309.500h4.500" stroke="#4a3f48" stroke-width=".8"/><path d="M418 300c3 6 4 16 2 26" stroke="#c4c2d0" stroke-width="1.500" fill="none"/><path d="M386 334c6-3 12-4 18-3" stroke="#b9b7c6" stroke-width="1.200" fill="none"/></g></g></g>
<text x="850.800" y="141.800" font-family="Liberation Serif,serif" font-style="italic" font-size="22" textLength="47" lengthAdjust="spacingAndGlyphs" fill="#86a07e" stroke="#86a07e" stroke-width="1.300" stroke-linejoin="round" transform="translate(0 141.800) skewX(11) scale(1 1.05) translate(0 -141.800)"><tspan font-size="24">d</tspan><tspan font-size="20">au</tspan></text>
<ellipse cx="841" cy="125" rx="3.500" ry="2.500" fill="#86a07e" transform="rotate(35 841 125)"/><ellipse cx="903" cy="145" rx="3.500" ry="2.500" fill="#86a07e" transform="rotate(40 903 145)"/>
<text x="895.500" y="181" font-family="Liberation Sans,sans-serif" font-size="5" textLength="20" lengthAdjust="spacingAndGlyphs" fill="#9ab296">©©©©</text>
</g><path d="M743.800 95.500v93.500M963 95.500v93.500" stroke="#e8201c" stroke-width="1.400"/></svg>
<div class="a" style="left:724.800px;top:189px;width:299.200px;height:4px;background:#1f1f1f"></div>
<div class="ph" style="left:724.8px;top:193px;width:299.2px;padding-right:22px">Lớp<svg width="299.2" height="15" viewBox="-160.2 0 299.2 15"><path d="M116.500 4.800v5h5.200v-2.500M118.800 7.300l3.600-3.600M120 3.400h2.700v2.700" fill="none" stroke="#bdbdbd" stroke-width="1"/><path d="M129.500 3.500l5 5M134.500 3.500l-5 5" stroke="#d0d0d0" stroke-width="1.800"/></svg></div>
<span class="t" style="left:729px;top:215px;font-size:8.200px;line-height:11px;color:#dedede">Độ trong</span>
<div class="a" style="left:804.300px;top:213.700px;width:175.700px;height:11.500px;background:linear-gradient(to right,#86c8f8,#4d97d2)"></div>
<span class="t" style="left:985px;top:215px;font-size:8.200px;line-height:11px;color:#dedede">100 %</span>
<span class="t" style="left:729px;top:233.300px;font-size:8.200px;line-height:11px;color:#dedede">Pha trộn</span>
<div class="a" style="left:804.300px;top:230.400px;width:215px;height:15.400px;background:#484848;border-radius:2px"><span class="t" style="left:2.500px;top:2.800px;font-size:8.200px;line-height:11px;color:#cfcfcf">Bình thường</span><svg width="215" height="15" viewBox="0 0 215 15"><path d="M204.500 6l3 3.200 3-3.200z" fill="#b8b8b8"/></svg></div>
<div class="a" style="left:731.300px;top:253.500px;width:8.500px;height:8.500px;border:1px solid #444;background:#2a2a2a"></div>
<span class="t" style="left:744px;top:253.200px;font-size:8.200px;line-height:11px;color:#6e6e6e">Bảo vệ alpha</span>
<div class="a" style="left:830.500px;top:253.500px;width:8.500px;height:8.500px;border:1px solid #c8c8c8;background:#222"></div>
<span class="t" style="left:842px;top:253.200px;font-size:8.200px;line-height:11px;color:#dedede">Xén bớt</span>
<div class="a" style="left:927.800px;top:253.500px;width:8.500px;height:8.500px;border:1px solid #c8c8c8;background:#222"></div>
<span class="t" style="left:940px;top:253.200px;font-size:8.200px;line-height:11px;color:#dedede">Khóa</span>
<div class="a" style="left:727px;top:267px;width:280.500px;height:67px;background:#303030"></div>
<div class="a" style="left:727px;top:268.400px;width:280.300px;height:29.400px;background:#4c9bd8"></div>
<div class="a" style="left:727px;top:268.400px;width:14px;height:29.400px;background:#565656"></div>
<div class="a" style="left:727px;top:299px;width:280.300px;height:29.200px;background:#565656"></div>
<div class="a" style="left:727px;top:329.400px;width:280.300px;height:4.600px;background:#565656"></div>
<div class="a" style="left:730.500px;top:279.500px;width:7px;height:7px;border-radius:50%;background:#dcdcdc"></div>
<div class="a" style="left:730.500px;top:310px;width:7px;height:7px;border-radius:50%;background:#dcdcdc"></div>
<div class="a" style="left:752px;top:278.400px;width:26.500px;height:9.400px;background:#e4ecd8;border:1px solid #f4f4f4;overflow:hidden;font-size:3.500px;line-height:3.800px;color:#565a3a;font-weight:bold;white-space:nowrap">@HuyenDayy09<br>#HeiDay247</div>
<div class="a" style="left:752px;top:303px;width:26.500px;height:19.400px;background:conic-gradient(#fff 25%,#e6e6e6 0 50%,#fff 0 75%,#e6e6e6 0) 0 0/5px 5px"><div class="a" style="left:18.500px;top:3.500px;width:3.500px;height:3.500px;background:#555"></div></div>
<span class="t" style="left:790.800px;top:278.200px;font-size:9.100px;letter-spacing:.15px;line-height:11px;font-weight:bold;color:#fff">@HuyenDayy09</span>
<span class="t" style="left:790.800px;top:308.800px;font-size:8.400px;line-height:11px;color:#f0f0f0">Lớp7</span>
<svg width="1024" height="576" viewBox="0 0 1024 576"><g transform="translate(997.600 283.400)" fill="#fff"><circle r="4.400"/><g stroke="#fff" stroke-width="2.700"><path d="M0-6.600V6.600M-6.600 0H6.600M-4.700-4.700L4.700 4.700M-4.700 4.700L4.700-4.700"/></g><circle r="1.700" fill="#4c9bd8"/></g></svg>
<div class="a" style="left:1008.200px;top:267px;width:14px;height:67px;background:#2a2a2a"></div>
<div class="a" style="left:1008.700px;top:276.600px;width:13px;height:13.200px;background:linear-gradient(to right,#6c6c6c,#7e7e7e 50%,#686868);border-radius:3.500px"></div>
<div class="a" style="left:1009.500px;top:290px;width:11.500px;height:34px;background:linear-gradient(to right,#333,#444,#303030)"></div>
<svg width="1024" height="576" viewBox="0 0 1024 576"><path d="M1012 273.800l3.200-4.400 3.200 4.400z M1012 326.600l3.200 4.400 3.200-4.400z" fill="#a8a8a8"/></svg>
<div class="sb" style="left:729.3px;top:336.400px;width:17px;height:16.500px;"><svg width="17" height="17" viewBox="0 0 17 17"><g transform="translate(.8 -.2) scale(.9)"><path d="M4.500 3h5l3 3v8h-8z M9.300 3v3.200h3.200" fill="none" stroke="#ececec" stroke-width="1.200"/></g></svg></div>
<div class="sb" style="left:749.8px;top:336.400px;width:17px;height:16.500px;"><svg width="17" height="17" viewBox="0 0 17 17"><g transform="translate(.8 -.2) scale(.9)"><path d="M4.500 3h5l3 3v8h-8z" fill="none" stroke="#ececec" stroke-width="1.200"/><text x="8.500" y="12.200" text-anchor="middle" font-size="6.500" font-weight="bold" font-family="Liberation Sans,sans-serif" fill="#ececec">8</text></g></svg></div>
<div class="sb" style="left:770.3px;top:336.400px;width:16.5px;height:16.500px;"><svg width="16.5" height="17" viewBox="0 0 16.5 17"><g transform="translate(.8 -.2) scale(.9)"><path d="M4.500 3h5l3 3v8h-8z" fill="none" stroke="#ececec" stroke-width="1.200"/><text x="8.500" y="12.200" text-anchor="middle" font-size="6.500" font-weight="bold" font-family="Liberation Sans,sans-serif" fill="#ececec">1</text></g></svg></div>
<div class="sb" style="left:790.2px;top:336.400px;width:22.5px;height:16.500px;"><svg width="22.5" height="17" viewBox="0 0 22.5 17"><g transform="translate(.8 -.2) scale(.9)"><path d="M4 3h4.500l2.500 2.500v3M8.500 13.500H4V3" fill="none" stroke="#ececec" stroke-width="1.200"/><path d="M10.500 9v5M8 11.500h5" stroke="#ececec" stroke-width="1.400"/><path d="M15.500 7.500h4.500l-2.250 2.800z" fill="#ececec"/></g></svg></div>
<div class="sb" style="left:815.4px;top:336.400px;width:17.5px;height:16.500px;"><svg width="17.5" height="17" viewBox="0 0 17.5 17"><g transform="translate(.8 -.2) scale(.9)"><path d="M3.500 4.500h4l1.200 1.500h5.300v7.500h-10.500z" fill="#ececec"/></g></svg></div>
<div class="sb" style="left:841.2px;top:336.400px;width:17px;height:16.500px;"><svg width="17" height="17" viewBox="0 0 17 17"><g transform="translate(.8 -.2) scale(.9)"><path d="M3.500 6.500h7v7h-7z M5.500 6.500v-2.500h7v7h-2" fill="none" stroke="#ececec" stroke-width="1.100"/></g></svg></div>
<div class="sb" style="left:861px;top:336.400px;width:17.7px;height:16.500px;background:#1c1c1c;border-color:#555;"><svg width="17.7" height="17" viewBox="0 0 17.7 17"><g transform="translate(.8 -.2) scale(.9)"><rect x="3.500" y="3.500" width="3.500" height="3" fill="#f8f8f8"/><rect x="3.500" y="10.500" width="3.500" height="3" fill="none" stroke="#f8f8f8" stroke-width=".9"/><rect x="9.500" y="6.500" width="4.500" height="4" fill="#f8f8f8"/><path d="M5.200 6.500v4M7 8.500h2.500" stroke="#f8f8f8" stroke-width=".9" fill="none"/></g></svg></div>
<div class="sb" style="left:887px;top:336.400px;width:17px;height:16.500px;"><svg width="17" height="17" viewBox="0 0 17 17"><g transform="translate(.8 -.2) scale(.9)"><path d="M3.800 5.500h9.400M6.800 5.200v-1.600h3.400v1.600" fill="none" stroke="#ececec" stroke-width="1.200"/><path d="M4.600 6.500h7.800v7.500h-7.800z" fill="#ececec"/><path d="M6.500 7.800v5M8.500 7.800v5M10.500 7.800v5" stroke="#474747" stroke-width=".9"/></g></svg></div>
<div class="a" style="left:836.8px;top:341px;width:1px;height:8px;background:#4a4a4a"></div>
<div class="a" style="left:882.5px;top:341px;width:1px;height:8px;background:#4a4a4a"></div>
<div class="a" style="left:724.800px;top:356px;width:299.200px;height:5px;background:#1f1f1f"></div>
<div class="ph" style="left:724.8px;top:361.5px;width:299.2px;padding-right:22px;height:16px">Brush Size<svg width="299.2" height="15" viewBox="-160.2 0 299.2 15"><path d="M116.500 4.800v5h5.200v-2.500M118.800 7.300l3.600-3.600M120 3.400h2.700v2.700" fill="none" stroke="#bdbdbd" stroke-width="1"/><path d="M129.500 3.500l5 5M134.500 3.500l-5 5" stroke="#d0d0d0" stroke-width="1.800"/></svg></div>
<div class="a" style="left:724.800px;top:377.500px;width:284.700px;height:152.500px;background:#4a4846"></div>
<div class="a" style="left:725.4px;top:377.6px;width:29px;height:36.600px;background:#575757"><svg width="29" height="37" viewBox="0 0 29 37"><circle cx="14.400" cy="14.6" r="0.55" fill="#f2f2f2" opacity="0.12"/></svg><span class="t" style="left:0;width:29px;text-align:center;top:28.400px;font-size:6.800px;line-height:8px;color:#f2f2f2">1</span></div>
<div class="a" style="left:755.4px;top:377.6px;width:29px;height:36.600px;background:#575757"><svg width="29" height="37" viewBox="0 0 29 37"><circle cx="14.400" cy="14.6" r="0.55" fill="#f2f2f2" opacity="0.22"/></svg><span class="t" style="left:0;width:29px;text-align:center;top:28.400px;font-size:6.800px;line-height:8px;color:#f2f2f2">1.5</span></div>
<div class="a" style="left:785.4px;top:377.6px;width:29px;height:36.600px;background:#575757"><svg width="29" height="37" viewBox="0 0 29 37"><circle cx="14.400" cy="14.6" r="0.65" fill="#f2f2f2" opacity="0.75"/></svg><span class="t" style="left:0;width:29px;text-align:center;top:28.400px;font-size:6.800px;line-height:8px;color:#f2f2f2">2</span></div>
<div class="a" style="left:815.4px;top:377.6px;width:29px;height:36.600px;background:#575757"><svg width="29" height="37" viewBox="0 0 29 37"><circle cx="14.400" cy="14.6" r="0.80" fill="#f2f2f2" opacity="1"/></svg><span class="t" style="left:0;width:29px;text-align:center;top:28.400px;font-size:6.800px;line-height:8px;color:#f2f2f2">3</span></div>
<div class="a" style="left:845.4px;top:377.6px;width:29px;height:36.600px;background:#575757"><svg width="29" height="37" viewBox="0 0 29 37"><circle cx="14.400" cy="14.6" r="1.15" fill="#f2f2f2" opacity="1"/></svg><span class="t" style="left:0;width:29px;text-align:center;top:28.400px;font-size:6.800px;line-height:8px;color:#f2f2f2">4</span></div>
<div class="a" style="left:875.4px;top:377.6px;width:29px;height:36.600px;background:#575757"><svg width="29" height="37" viewBox="0 0 29 37"><circle cx="14.400" cy="14.6" r="1.40" fill="#f2f2f2" opacity="1"/></svg><span class="t" style="left:0;width:29px;text-align:center;top:28.400px;font-size:6.800px;line-height:8px;color:#f2f2f2">5</span></div>
<div class="a" style="left:905.4px;top:377.6px;width:29px;height:36.600px;background:#575757"><svg width="29" height="37" viewBox="0 0 29 37"><circle cx="14.400" cy="14.6" r="2.30" fill="#f2f2f2" opacity="1"/></svg><span class="t" style="left:0;width:29px;text-align:center;top:28.400px;font-size:6.800px;line-height:8px;color:#f2f2f2">7</span></div>
<div class="a" style="left:935.4px;top:377.6px;width:29px;height:36.600px;background:#575757"><svg width="29" height="37" viewBox="0 0 29 37"><circle cx="14.400" cy="14.6" r="3.50" fill="#f2f2f2" opacity="1"/></svg><span class="t" style="left:0;width:29px;text-align:center;top:28.400px;font-size:6.800px;line-height:8px;color:#f2f2f2">10</span></div>
<div class="a" style="left:965.4px;top:377.6px;width:29px;height:36.600px;background:#575757"><svg width="29" height="37" viewBox="0 0 29 37"><circle cx="14.400" cy="14.6" r="4.30" fill="#f2f2f2" opacity="1"/></svg><span class="t" style="left:0;width:29px;text-align:center;top:28.400px;font-size:6.800px;line-height:8px;color:#f2f2f2">12</span></div>
<div class="a" style="left:725.4px;top:415.6px;width:29px;height:36.600px;background:#575757"><svg width="29" height="37" viewBox="0 0 29 37"><circle cx="14.400" cy="14.3" r="5.50" fill="#f2f2f2" opacity="1"/></svg><span class="t" style="left:0;width:29px;text-align:center;top:28.400px;font-size:6.800px;line-height:8px;color:#f2f2f2">15</span></div>
<div class="a" style="left:755.4px;top:415.6px;width:29px;height:36.600px;background:#575757"><svg width="29" height="37" viewBox="0 0 29 37"><circle cx="14.400" cy="14.3" r="7.50" fill="#f2f2f2" opacity="1"/></svg><span class="t" style="left:0;width:29px;text-align:center;top:28.400px;font-size:6.800px;line-height:8px;color:#f2f2f2">20</span></div>
<div class="a" style="left:785.4px;top:415.6px;width:29px;height:36.600px;background:#575757"><svg width="29" height="37" viewBox="0 0 29 37"><circle cx="14.400" cy="14.3" r="9.15" fill="#f2f2f2" opacity="1"/></svg><span class="t" style="left:0;width:29px;text-align:center;top:28.400px;font-size:6.800px;line-height:8px;color:#f2f2f2">25</span></div>
<div class="a" style="left:815.4px;top:415.6px;width:29px;height:36.600px;background:#575757"><svg width="29" height="37" viewBox="0 0 29 37"><circle cx="14.400" cy="14.3" r="9.15" fill="#f2f2f2" opacity="1"/></svg><span class="t" style="left:0;width:29px;text-align:center;top:28.400px;font-size:6.800px;line-height:8px;color:#f2f2f2">30</span></div>
<div class="a" style="left:845.4px;top:415.6px;width:29px;height:36.600px;background:#575757"><svg width="29" height="37" viewBox="0 0 29 37"><circle cx="14.400" cy="14.3" r="9.15" fill="#f2f2f2" opacity="1"/></svg><span class="t" style="left:0;width:29px;text-align:center;top:28.400px;font-size:6.800px;line-height:8px;color:#f2f2f2">40</span></div>
<div class="a" style="left:875.4px;top:415.6px;width:29px;height:36.600px;background:#575757"><svg width="29" height="37" viewBox="0 0 29 37"><circle cx="14.400" cy="14.3" r="9.15" fill="#f2f2f2" opacity="1"/></svg><span class="t" style="left:0;width:29px;text-align:center;top:28.400px;font-size:6.800px;line-height:8px;color:#f2f2f2">50</span></div>
<div class="a" style="left:905.4px;top:415.6px;width:29px;height:36.600px;background:#575757"><svg width="29" height="37" viewBox="0 0 29 37"><circle cx="14.400" cy="14.3" r="9.15" fill="#f2f2f2" opacity="1"/></svg><span class="t" style="left:0;width:29px;text-align:center;top:28.400px;font-size:6.800px;line-height:8px;color:#f2f2f2">70</span></div>
<div class="a" style="left:935.4px;top:415.6px;width:29px;height:36.600px;background:#575757"><svg width="29" height="37" viewBox="0 0 29 37"><circle cx="14.400" cy="14.3" r="9.15" fill="#f2f2f2" opacity="1"/></svg><span class="t" style="left:0;width:29px;text-align:center;top:28.400px;font-size:6.800px;line-height:8px;color:#f2f2f2">100</span></div>
<div class="a" style="left:965.4px;top:415.6px;width:29px;height:36.600px;background:#575757"><svg width="29" height="37" viewBox="0 0 29 37"><circle cx="14.400" cy="14.3" r="9.15" fill="#f2f2f2" opacity="1"/></svg><span class="t" style="left:0;width:29px;text-align:center;top:28.400px;font-size:6.800px;line-height:8px;color:#f2f2f2">150</span></div>
<div class="a" style="left:725.4px;top:453px;width:29px;height:36.600px;background:#575757"><svg width="29" height="37" viewBox="0 0 29 37"><circle cx="14.400" cy="14.3" r="9.15" fill="#f2f2f2" opacity="1"/></svg><span class="t" style="left:0;width:29px;text-align:center;top:28.400px;font-size:6.800px;line-height:8px;color:#f2f2f2">200</span></div>
<div class="a" style="left:755.4px;top:453px;width:29px;height:36.600px;background:#575757"><svg width="29" height="37" viewBox="0 0 29 37"><circle cx="14.400" cy="14.3" r="9.15" fill="#f2f2f2" opacity="1"/></svg><span class="t" style="left:0;width:29px;text-align:center;top:28.400px;font-size:6.800px;line-height:8px;color:#f2f2f2">300</span></div>
<div class="a" style="left:785.4px;top:453px;width:29px;height:36.600px;background:#575757"><svg width="29" height="37" viewBox="0 0 29 37"><circle cx="14.400" cy="14.3" r="9.15" fill="#f2f2f2" opacity="1"/></svg><span class="t" style="left:0;width:29px;text-align:center;top:28.400px;font-size:6.800px;line-height:8px;color:#f2f2f2">400</span></div>
<div class="a" style="left:815.4px;top:453px;width:29px;height:36.600px;background:#575757"><svg width="29" height="37" viewBox="0 0 29 37"><circle cx="14.400" cy="14.3" r="9.15" fill="#f2f2f2" opacity="1"/></svg><span class="t" style="left:0;width:29px;text-align:center;top:28.400px;font-size:6.800px;line-height:8px;color:#f2f2f2">500</span></div>
<div class="a" style="left:845.4px;top:453px;width:29px;height:36.600px;background:#575757"><svg width="29" height="37" viewBox="0 0 29 37"><circle cx="14.400" cy="14.3" r="9.15" fill="#f2f2f2" opacity="1"/></svg><span class="t" style="left:0;width:29px;text-align:center;top:28.400px;font-size:6.800px;line-height:8px;color:#f2f2f2">700</span></div>
<div class="a" style="left:875.4px;top:453px;width:29px;height:36.600px;background:#575757"><svg width="29" height="37" viewBox="0 0 29 37"><circle cx="14.400" cy="14.3" r="9.15" fill="#f2f2f2" opacity="1"/></svg><span class="t" style="left:0;width:29px;text-align:center;top:28.400px;font-size:6.800px;line-height:8px;color:#f2f2f2">1000</span></div>
<div class="a" style="left:1009.500px;top:377.500px;width:14.500px;height:152.500px;background:linear-gradient(to right,#2a2a2a,#383838 50%,#2c2c2c)"></div>
<div class="a" style="left:1010.300px;top:385px;width:12.500px;height:133px;background:linear-gradient(to right,#6c6c6c,#7e7e7e 50%,#686868);border-radius:3.500px"></div>
<svg width="1024" height="576" viewBox="0 0 1024 576"><path d="M1013.500 383.300l3-4 3 4z M1013.500 522.700l3 4 3-4z" fill="#9c9c9c"/></svg>
<div class="a" style="left:724.800px;top:530px;width:299.200px;height:16px;background:#222"></div>
<div class="a" style="left:726.500px;top:530px;width:43px;height:15.500px;background:#2e2e2e;color:#cfcfcf;font-size:8px;line-height:17px;text-align:center">Brush Size</div>
<div class="a" style="left:769.500px;top:530px;width:46px;height:15.500px;background:#3a3a3a;color:#d8d8d8;font-size:8px;line-height:14px;text-align:center">Reference</div>
<div class="a" style="left:0;top:546px;width:1024px;height:30px;background:#eeeeef"></div>
<div class="a" style="left:590px;top:546px;width:35.500px;height:30px;background:#fafafa"></div>
<div class="a" style="left:36px;top:546.500px;width:257.800px;height:29.500px;background:#fff;border:1px solid #d6d6d6;border-bottom:0"></div>
<span class="t" style="left:66px;top:554.500px;font-family:Liberation Sans,sans-serif;font-size:10.800px;line-height:13px;color:#333">Type here to search</span>
<svg width="1024" height="576" viewBox="0 0 1024 576">
<path d="M12 556.800l5.200-.800v4.600H12zM18 555.900l6.500-1v5.700H18zM12 561.400h5.200v4.600L12 565.200zM18 561.400h6.500v5.700l-6.500-1z" fill="#111"/>
<circle cx="52.300" cy="559.300" r="3.500" fill="none" stroke="#222" stroke-width="1.100"/><path d="M49.800 562l-4.300 4.400" stroke="#222" stroke-width="1.200"/>
<path d="M307.500 557.500h7v6.500h-7zM307.500 555.500h7M307.500 566h7M317 557.500v1.500M317 561v3" fill="none" stroke="#222" stroke-width="1.100"/>
<rect x="341.800" y="553.500" width="15.500" height="15.500" rx="4.200" fill="#4a8cf7"/><rect x="344.800" y="558.300" width="6.800" height="5.800" rx="1.200" fill="#fff"/><path d="M352.300 560.500l2.600-1.900v5.300l-2.600-1.900z" fill="#fff"/>
<circle cx="386" cy="560.500" r="7.500" fill="#e9453a"/><path d="M386 560.500l-6.500-3.750a7.500 7.500 0 0 0 3.250 10.600z" fill="#2ea04f"/><path d="M386 560.500l-3.250 6.850a7.500 7.500 0 0 0 10.750-6.850z" fill="#f7c325"/><circle cx="386" cy="560.500" r="3.400" fill="#fff"/><circle cx="386" cy="560.500" r="2.600" fill="#4a86e8"/><circle cx="390.800" cy="565.200" r="4.600" fill="#e8c6b4"/><circle cx="390.800" cy="564.200" r="1.700" fill="#c99a88"/>
<path d="M416 554.500h5l1.300 1.500h9v3h-15.300z" fill="#e8a92a"/><rect x="416" y="557.500" width="15.300" height="9.800" fill="#f9cf4e"/><rect x="419.500" y="562.500" width="8.300" height="4.800" fill="#3e8ad6"/><rect x="421.500" y="564.500" width="4.300" height="2.800" fill="#f9cf4e"/>
<rect x="452.500" y="553" width="16" height="16" rx="5.500" fill="#fff" stroke="#1f6fe0" stroke-width="1.300"/><text x="460.500" y="563.300" text-anchor="middle" font-family="Liberation Sans,sans-serif" font-weight="bold" font-size="5.600" fill="#1f6fe0">Zalo</text>
<circle cx="497.0" cy="562.500" r="6" fill="#6ab53c"/><circle cx="497.0" cy="562.500" r="3" fill="#fff"/><circle cx="497.0" cy="562.500" r="1.500" fill="#6ab53c"/><path d="M499.5 556l1.500-2.800M501.5 558.500l2.800-1.500" stroke="#e8452c" stroke-width="1.500" stroke-linecap="round"/><circle cx="500.5" cy="556.500" r="1.500" fill="#fff"/>
<circle cx="570.0" cy="562.500" r="6" fill="#6ab53c"/><circle cx="570.0" cy="562.500" r="3" fill="#fff"/><circle cx="570.0" cy="562.500" r="1.500" fill="#6ab53c"/><path d="M572.5 556l1.500-2.800M574.5 558.500l2.800-1.500" stroke="#e8452c" stroke-width="1.500" stroke-linecap="round"/><circle cx="573.5" cy="556.500" r="1.500" fill="#fff"/>
<path d="M526 555.500h3.200l2.300 7 2.500-6 2.500 6 2.300-7H542l-4 12.500h-2.200l-1.800-4.500-1.800 4.500H530z" fill="#e8311e"/>
<rect x="599.500" y="553.500" width="16.500" height="16.500" rx="3.500" fill="#fff"/><circle cx="607.800" cy="561.500" r="6.200" fill="#2fae6c"/><path d="M607.800 561.500V555.300a6.200 6.200 0 0 0-5.370 9.300z" fill="#ef4136"/><path d="M607.800 561.500l-5.370 3.100a6.200 6.200 0 0 0 10.740 0z" fill="#2d8fdc"/><circle cx="607.800" cy="561.500" r="2.400" fill="#fff" opacity=".85"/>
<path d="M372 575h30M555 575h30M590 575h35.500" stroke="#a79bc8" stroke-width="2"/>
<path d="M762.300 563l4.400-4.400 4.400 4.400" fill="none" stroke="#222" stroke-width="1.200"/>
<rect x="785.800" y="555.800" width="11.500" height="11" fill="#fff4f2" stroke="#d8483c" stroke-width="1"/><path d="M788.300 558l3.200 7 3.200-7" fill="none" stroke="#d8281c" stroke-width="1.400"/>
<path d="M809 559.500h2.200l3-2.800v9l-3-2.800H809z" fill="none" stroke="#222" stroke-width="1"/><path d="M816 559.300c.900.900.900 3.100 0 4M817.800 557.600c1.800 1.800 1.800 5.600 0 7.400M819.600 556c2.600 2.600 2.600 8 0 10.600" fill="none" stroke="#222" stroke-width=".9"/>
<rect x="834.500" y="558.500" width="10" height="6" fill="#222"/><path d="M833.500 560v3M836 557v2M838 557v2" stroke="#222" stroke-width="1.200"/><rect x="836" y="560" width="7" height="3" fill="#555"/>
<path d="M859.500 566.500a7 7 0 0 1 7-7M859.500 566.500a4.600 4.600 0 0 1 4.600-4.600M859.500 566.500a2.400 2.400 0 0 1 2.400-2.400" fill="none" stroke="#9a9a9a" stroke-width=".9" transform="rotate(0)"/><circle cx="866.800" cy="565.800" r="1.100" fill="#222"/>
<path d="M887.500 565c-2 1-3.500-.500-2.500-2s3-1.500 3.500 0-.500 3.500-2.500 3.500M887 563l4-6.500c1-1.500 3.500-.500 2.500 1.500l-4.500 7" fill="none" stroke="#222" stroke-width="1.100"/>
<path d="M993.500 556h11v8.500h-3.500l-2 2.200-2-2.200h-3.500z" fill="#111"/><path d="M995.500 558.500h7M995.500 560.500h7M995.500 562.500h4.500" stroke="#eee" stroke-width=".7"/>
</svg>
<span class="t" style="left:908.800px;top:555.200px;font-family:Liberation Sans,sans-serif;font-size:8.600px;line-height:11px;color:#1a1a1a">ENG</span>
<span class="t" style="left:936px;width:44px;text-align:center;top:548px;font-family:Liberation Sans,sans-serif;font-size:8.600px;line-height:11px;color:#1a1a1a">5:58 CH</span>
<span class="t" style="left:936px;width:44px;text-align:center;top:562px;font-family:Liberation Sans,sans-serif;font-size:8.600px;line-height:11px;color:#1a1a1a">01/09/2021</span>
</div></body></html>
